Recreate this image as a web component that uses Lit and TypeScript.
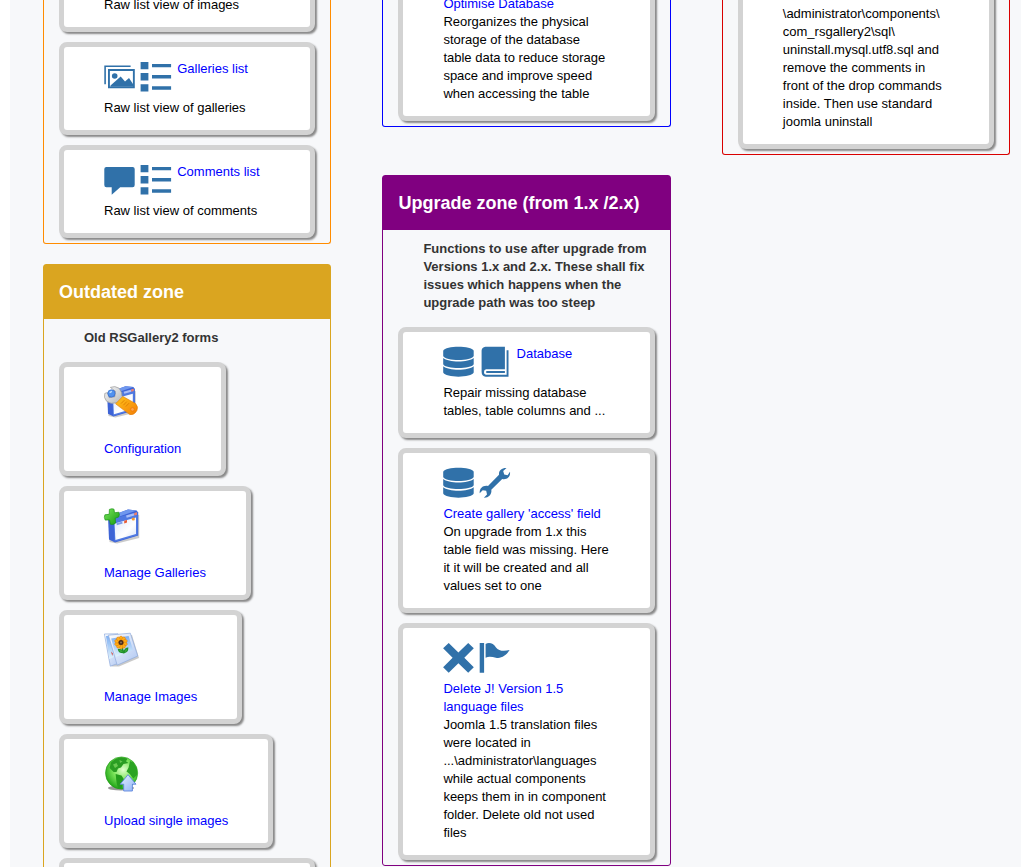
import { LitElement, html, css, svg, nothing } from "lit";
import { customElement, property } from "lit/decorators.js";

const glyphs: Record<string, unknown> = {
  images: svg`
    <path d="M.3 24.2V5.4H26.6V7.1H1.9V24.2Z"/>
    <path fill-rule="evenodd" d="M4 9H30.8V28.3H4ZM5.9 10.9V26.4H28.9V10.9Z"/>
    <circle cx="10.7" cy="16" r="2.8"/>
    <path d="M6.5 26.8V25.4L16.7 16.4L21 21.6L25 18L29 24V26.8Z"/>`,
  list: svg`
    <path d="M.6 2H8.4V9.2H.6ZM.6 13.1H8.4V20.4H.6ZM.6 24.2H8.4V31.5H.6ZM12 4H31.1V7.3H12ZM12 15.1H31.1V18.6H12ZM12 26.3H31.1V29.8H12Z"/>`,
  comment: svg`
    <path d="M2.4 4H28.6Q30.7 4 30.7 6V22Q30.7 24.2 28.6 24.2H16.2L7.7 31.8V24.2H2.4Q.3 24.2 .3 22V6Q.3 4 2.4 4Z"/>`,
  database: svg`
    <path d="M.2 5.8C2.5 .4 28.4 .4 30.7 5.8V11.1C28.4 16.4 2.5 16.4 .2 11.1Z"/>
    <path d="M.2 13.1C5 17.7 25.9 17.7 30.7 13.1V19.2C28.4 24.2 2.5 24.2 .2 19.2Z"/>
    <path d="M.2 21.2C5 25.8 25.9 25.8 30.7 21.2V27.6C28.4 33.1 2.5 33.1 .2 27.6Z"/>`,
  book: svg`
    <path fill-rule="evenodd" d="M6.4 1.8H25.9V24.3H7.2Q5 24.4 5 26.9Q5 29.6 7.4 29.7H27.6V5.2H29.5V31.7H6.7Q2.6 31.2 2.6 26.7V5.6Q2.9 2.2 6.4 1.8ZM7.6 26.1H25.9V28H7.6Q6.2 27 7.6 26.1Z"/>`,
  wrench: svg`
    <path d="M20 8.8C19.6 4.6 22.6 1.8 27.5 2L24.2 5.1L25.2 8.6L28.6 9.2L31 5.7C31.7 10.9 28 14.2 23.2 13.1L12.3 23.7C13.1 28 9.8 32 4.9 31.7L8 28.4L7.2 24.8L3.7 24.2L.7 27.3C.2 22.4 4.1 18.9 9 20Z"/>`,
  cross: svg`
    <path d="M5.7 1.9L15.4 11.4L25.2 1.9L30.8 7.3L21.3 16.8L30.8 26.3L25.2 31.7L15.4 22.2L5.7 31.7L.1 26.3L9.6 16.8L.1 7.3Z"/>`,
  flag: svg`
    <path d="M.7 1.9H5.1V31.7H.7ZM6.6 2.9C9.8 1.2 14.5 2 17 6.4C19.7 10.4 25.5 10 30.6 9.1C26.9 15.1 21.8 17.8 16.9 16.7C13.1 15.8 9.8 15 6.6 16.7Z"/>`,
};

const windowBox = svg`
  <path d="M5 13L26 4.6L35.2 7V30L13 35.6L5.5 34Z" fill="#666" opacity=".35"/>
  <path d="M4 9L24 1.6L32.6 2.4L34.2 4.6V27.6L11 34.4L5 31.6Z" fill="#3d63d6"/>
  <path d="M4 9L24 1.6L32.6 2.4L9.6 10.4Z" fill="#6f97ee"/>
  <path d="M9.6 10.6L33.6 4V27.2L10.6 33.8Z" fill="#4f79e2"/>
  <path d="M10.6 15.4L32 9.6V26L11.4 32Z" fill="url(#pane)"/>
  <path d="M22.4 8.6L30 6.4" stroke="#a9bdf8" stroke-width="2.4"/>
  <path d="M30.2 4.9L33 4.2V6.8L30.2 7.5Z" fill="#f08068"/>`;

const pictures: Record<string, unknown> = {
  config: svg`
    <defs>
      <linearGradient id="pane" x1="0" y1="0" x2="1" y2="1"><stop offset="0" stop-color="#dbe6fc"/><stop offset=".6" stop-color="#fff"/><stop offset="1" stop-color="#d4e1fa"/></linearGradient>
      <linearGradient id="metal" x1="0" y1="0" x2="1" y2="1"><stop offset="0" stop-color="#fafafa"/><stop offset="1" stop-color="#a5a9ac"/></linearGradient>
      <linearGradient id="grip" x1="0" y1="0" x2="1" y2="1"><stop offset="0" stop-color="#ffc51c"/><stop offset="1" stop-color="#f47f05"/></linearGradient>
    </defs>
    <g transform="translate(-.6 .8) scale(.92)">${windowBox}</g>
    <path d="M6.4 3.4Q11 1.4 15 4.2L17.6 8.4L18 12.4L23 16.2L17 22L12.6 18.7Q7 20.6 2.6 17.2Q-.6 13.6 .8 9.4L3.4 8.6L5.2 13.7L10.8 12.8L11.6 7.4Z" fill="url(#metal)" stroke="#999" stroke-width=".7"/>
    <circle cx="7.4" cy="9.4" r="3.6" fill="#5192ef" stroke="#3269c7" stroke-width=".6"/>
    <path d="M5.6 8.6L7.8 7.4" stroke="#c3e3ff" stroke-width="1.3"/>
    <path d="M11.6 19.8L18.8 12.4L31.6 19.6Q34.7 23 32.8 26.8Q30 31.6 25.7 30.6Z" fill="url(#grip)" stroke="#dd7906" stroke-width=".6"/>
    <path d="M17 19.6L20.4 16.2M19.4 21.2L22.8 17.6M21.8 22.6L25 19.2" stroke="#d87900" stroke-width=".8"/>
    <circle cx="28.5" cy="25.4" r="1.8" fill="#ffa64a" stroke="#e66b08" stroke-width=".6"/>`,
  galleries: svg`
    <defs>
      <linearGradient id="pane" x1="0" y1="0" x2="1" y2="1"><stop offset="0" stop-color="#dbe6fc"/><stop offset=".6" stop-color="#fff"/><stop offset="1" stop-color="#d4e1fa"/></linearGradient>
      <linearGradient id="plus" x1="0" y1="0" x2="1" y2="1"><stop offset="0" stop-color="#7be65c"/><stop offset="1" stop-color="#159a10"/></linearGradient>
    </defs>
    ${windowBox}
    <path d="M12.6 16.2L18.4 14.6" stroke="#7d9de8" stroke-width="2"/>
    <path d="M20.2 12.8L23 12V14.6L20.2 15.4Z" fill="#e95b34"/>
    <circle cx="29.3" cy="11" r="1.6" fill="#f49a2f"/>
    <path d="M5.4 1.4Q8 .2 10 1.2L10.5 4.8L14.8 4.2Q16 7 14.6 9L11.2 10.1L11.6 15.1Q9.6 17.2 6.4 16.2L5.6 11.9L1.2 12.1Q-.3 9.5 .9 6.8L5.2 6.3Z" fill="url(#plus)" stroke="#1a9413" stroke-width=".7"/>`,
  photos: svg`
    <defs>
      <linearGradient id="card" x1="0" y1="0" x2="1" y2="1"><stop offset="0" stop-color="#fff"/><stop offset="1" stop-color="#aec6f2"/></linearGradient>
      <linearGradient id="sky" x1="0" y1="0" x2="0" y2="1"><stop offset="0" stop-color="#7eaff2"/><stop offset="1" stop-color="#e0f3fd"/></linearGradient>
    </defs>
    <path d="M2 4L28 3L35 26L15 34.6L7.5 34.6Z" fill="#666" opacity=".35"/>
    <path d="M.4 2L14 1.8L18 30L6.3 34.2Z" fill="url(#card)" stroke="#8eabdc" stroke-width=".7"/>
    <path d="M2 4L7 3.6L10 25L5.2 27Z" fill="url(#sky)"/>
    <path d="M7.2 19.5L8.8 21.5L8.2 24Z" fill="#d4362f"/>
    <path d="M4.4 3.2L26.3 1.2L33.8 24L13.2 33.2Z" fill="url(#card)" stroke="#8eabdc" stroke-width=".7"/>
    <path d="M7.2 6.5L24.6 4L29.1 18L12 24.8Z" fill="url(#sky)"/>
    <path d="M17.5 14L20.2 21.5M20 20.6Q15 20.8 14.5 17.6Q18.5 17 20 20.6Q20.4 16.8 23.7 16.1Q24 20 20 20.6" stroke="#20902c" stroke-width="1.2" fill="#43b43b"/>
    <g transform="translate(17 10.6)">
      ${[0, 36, 72, 108, 144, 180, 216, 252, 288, 324].map(
        (a) => svg`<ellipse cx="0" cy="-4.2" rx="1.7" ry="2.3" fill="#ffae16" stroke="#e07a0b" stroke-width=".5" transform="rotate(${a})"/>`
      )}
      <circle r="2.5" fill="#4d2a17"/><circle r="1" fill="#8b7357"/>
    </g>`,
  globe: svg`
    <defs>
      <radialGradient id="sea" cx=".55" cy=".4" r=".6"><stop offset="0" stop-color="#e4ffd0"/><stop offset=".5" stop-color="#7ee65c"/><stop offset="1" stop-color="#25a81a"/></radialGradient>
      <linearGradient id="arrow" x1="0" y1="0" x2="1" y2="1"><stop offset="0" stop-color="#e6f0ff"/><stop offset="1" stop-color="#8eb3f6"/></linearGradient>
    </defs>
    <ellipse cx="17" cy="32" rx="13" ry="2.6" fill="#444" opacity=".55"/>
    <circle cx="17.6" cy="17" r="16.1" fill="url(#sea)" stroke="#219a18" stroke-width=".6"/>
    <path d="M7 6.6Q11 2.2 17 1.2L23.6 2.4L22 5.2L24.5 7L19.5 8L17 11.5L14 12.6L12.5 16L9.6 16L5.6 12Z" fill="#2a9d22"/>
    <path d="M11.6 18L17.5 19.5L20 23.6L17.4 32.5L14 32.4L12.6 27Z" fill="#249d1c"/>
    <path d="M26 5L29.5 6.5L33 12.5L33 19L29.3 22.6L25.8 18L22.5 15.6L24.6 11.4Z" fill="#2ba323"/>
    <path d="M9 8.5L12.5 7L14 10L11 12ZM15.5 4L18.6 5.5L16 7Z" fill="#68c950"/>
    <path d="M24 18.7L32 28.2H28.4V35H19.7V28.2H16.2Z" fill="url(#arrow)" stroke="#5f86dd" stroke-width=".9"/>`,
};

type Card = {
  icons?: string[];
  link?: string[];
  below?: boolean;
  lines?: string[];
  picture?: string;
  wide?: boolean;
};

@customElement("rsg-card")
class RsgCard extends LitElement {
  @property({ attribute: false }) card: Card = {};

  static styles = css`
    :host {
      display: flex;
      flex: none;
    }
    .card {
      box-sizing: border-box;
      width: 100%;
      border: 5px solid #d3d3d3;
      border-radius: 8px;
      background: #fff;
      padding: 13px 40px;
      box-shadow: 2px 2px 2px #888;
      white-space: nowrap;
    }
    .card.small {
      width: auto;
    }
    .head {
      display: flex;
      height: 39px;
      align-items: flex-start;
    }
    .head a {
      margin-left: 1.2px;
    }
    .glyph {
      flex: none;
      width: 33px;
      height: 33px;
      margin-right: 3px;
      fill: #3071a9;
    }
    .picture {
      display: block;
      width: 36px;
      height: 37px;
      padding: 4px 0 19px;
      overflow: visible;
    }
    a {
      color: #00f;
      text-decoration: none;
    }
    .line {
      display: block;
      height: 18px;
    }
  `;

  render() {
    const c = this.card;
    const link = c.link
      ? html`<a>${c.link.map((l) => html`<span class="line">${l}</span>`)}</a>`
      : nothing;
    return html`<div class="card ${c.picture && !c.wide ? "small" : ""}">
      ${c.picture
        ? html`<svg class="picture" viewBox="0 0 36 37">${pictures[c.picture]}</svg>${link}`
        : html`${c.icons
              ? html`<div class="head">
                  ${c.icons.map((i) => html`<svg class="glyph" viewBox="0 0 33 33">${glyphs[i]}</svg>`)}
                  ${c.below ? nothing : link}
                </div>`
              : nothing}
            ${c.below ? link : nothing}
            ${(c.lines ?? []).map((l) => html`<span class="line">${l}</span>`)}`}
    </div>`;
  }
}

type Zone = { tone: string; title?: string; note?: string[]; cards: Card[] };

const columns: Zone[][] = [
  [
    {
      tone: "raw cut",
      cards: [
        { lines: ["Raw list view of images"] },
        { icons: ["images", "list"], link: ["Galleries list"], lines: ["Raw list view of galleries"] },
        { icons: ["comment", "list"], link: ["Comments list"], lines: ["Raw list view of comments"] },
      ],
    },
    {
      tone: "outdated",
      title: "Outdated zone",
      note: ["Old RSGallery2 forms"],
      cards: [
        { picture: "config", link: ["Configuration"] },
        { picture: "galleries", link: ["Manage Galleries"] },
        { picture: "photos", link: ["Manage Images"] },
        { picture: "globe", link: ["Upload single images"] },
        { picture: "globe", wide: true },
      ],
    },
  ],
  [
    {
      tone: "repair cut",
      cards: [
        {
          icons: ["database"],
          below: true,
          link: ["Optimise Database"],
          lines: [
            "Reorganizes the physical",
            "storage of the database",
            "table data to reduce storage",
            "space and improve speed",
            "when accessing the table",
          ],
        },
      ],
    },
    {
      tone: "upgrade",
      title: "Upgrade zone (from 1.x /2.x)",
      note: [
        "Functions to use after upgrade from",
        "Versions 1.x and 2.x. These shall fix",
        "issues which happens when the",
        "upgrade path was too steep",
      ],
      cards: [
        {
          icons: ["database", "book"],
          link: ["Database"],
          lines: ["Repair missing database", "tables, table columns and ..."],
        },
        {
          icons: ["database", "wrench"],
          below: true,
          link: ["Create gallery 'access' field"],
          lines: [
            "On upgrade from 1.x this",
            "table field was missing. Here",
            "it it will be created and all",
            "values set to one",
          ],
        },
        {
          icons: ["cross", "flag"],
          below: true,
          link: ["Delete J! Version 1.5", "language files"],
          lines: [
            "Joomla 1.5 translation files",
            "were located in",
            "...\\administrator\\languages",
            "while actual components",
            "keeps them in in component",
            "folder. Delete old not used",
            "files",
          ],
        },
      ],
    },
  ],
  [
    {
      tone: "danger cut",
      cards: [
        {
          lines: [
            "\\administrator\\components\\",
            "com_rsgallery2\\sql\\",
            "uninstall.mysql.utf8.sql and",
            "remove the comments in",
            "front of the drop commands",
            "inside. Then use standard",
            "joomla uninstall",
          ],
        },
      ],
    },
  ],
];

@customElement("app-root")
class AppRoot extends LitElement {
  static styles = css`
    :host {
      display: block;
      height: 867px;
      overflow: hidden;
      background: #fff;
      padding-left: 10px;
      font: 13px/18px "Liberation Sans", Arial, sans-serif;
      color: #000;
    }
    .page {
      box-sizing: border-box;
      height: 867px;
      overflow: hidden;
      background: #f7f8fa;
      padding-left: 33px;
      display: grid;
      grid-template-columns: repeat(3, 288.4px);
      column-gap: 51px;
      align-items: start;
    }
    .zone {
      display: flex;
      flex-direction: column;
      box-sizing: border-box;
      border: 1px solid var(--tone);
      border-radius: 3px;
      margin-bottom: 20px;
    }
    .cut {
      justify-content: flex-end;
      border-top: 0;
      border-radius: 0 0 3px 3px;
      overflow: hidden;
    }
    .raw {
      --tone: #ff8c00;
      height: 244px;
    }
    .outdated {
      --tone: #daa520;
    }
    .repair {
      --tone: #00f;
      height: 127px;
      margin-bottom: 48px;
    }
    .upgrade {
      --tone: #800080;
    }
    .danger {
      --tone: #d90000;
      height: 155px;
    }
    .title {
      margin: 0;
      height: 54px;
      padding: 0 15px;
      background: var(--tone);
      color: #fff;
      font-size: 18px;
      line-height: 54px;
      font-weight: bold;
      white-space: nowrap;
    }
    .note {
      padding: 10px 0 10px 40px;
      font-weight: bold;
      color: #333;
      white-space: nowrap;
    }
    .note span {
      display: block;
    }
    .cards {
      display: flex;
      flex-direction: column;
      gap: 10px;
      padding: 5px 15px;
    }
  `;

  render() {
    return html`<main class="page">
      ${columns.map(
        (zones) => html`<div>
          ${zones.map(
            (z) => html`<section class="zone ${z.tone}">
              ${z.title ? html`<h3 class="title">${z.title}</h3>` : nothing}
              ${z.note ? html`<div class="note">${z.note.map((n) => html`<span>${n}</span>`)}</div>` : nothing}
              <div class="cards">${z.cards.map((c) => html`<rsg-card .card=${c}></rsg-card>`)}</div>
            </section>`
          )}
        </div>`
      )}
    </main>`;
  }
}
